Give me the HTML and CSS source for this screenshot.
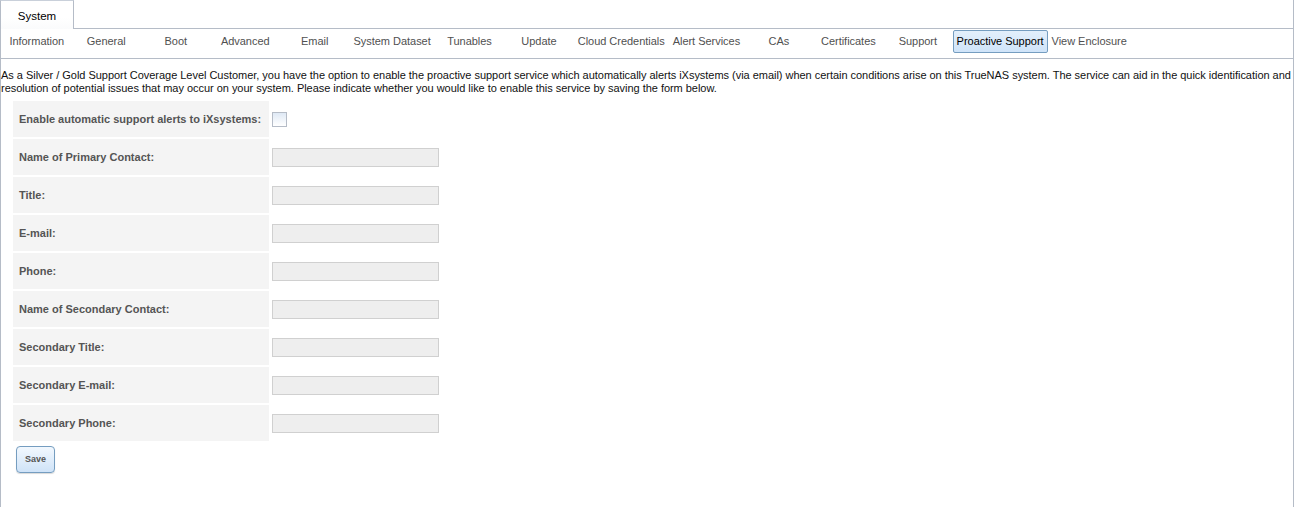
FILE: index.html
```html
<!DOCTYPE html>
<html>
<head>
<meta charset="utf-8">
<title>System - Proactive Support</title>
<link rel="stylesheet" href="styles.css">
</head>
<body>
<div class="tabs">
  <div class="tabstrip">
    <div class="tab">System</div>
    <div class="strip-rest"></div>
  </div>
  <div class="panel">
    <div class="subnav">
      <span class="item">Information</span>
      <span class="item">General</span>
      <span class="item">Boot</span>
      <span class="item">Advanced</span>
      <span class="item">Email</span>
      <span class="item">System Dataset</span>
      <span class="item">Tunables</span>
      <span class="item">Update</span>
      <span class="item">Cloud Credentials</span>
      <span class="item">Alert Services</span>
      <span class="item">CAs</span>
      <span class="item">Certificates</span>
      <span class="item">Support</span>
      <span class="item active">Proactive Support</span>
      <span class="item">View Enclosure</span>
    </div>
    <div class="content">
      <p class="desc">As a Silver / Gold Support Coverage Level Customer, you have the option to enable the proactive support service which automatically alerts iXsystems (via email) when certain conditions arise on this TrueNAS system. The service can aid in the quick identification and resolution of potential issues that may occur on your system. Please indicate whether you would like to enable this service by saving the form below.</p>
      <table class="form">
        <tr><th>Enable automatic support alerts to iXsystems:</th><td><input type="checkbox" class="check"></td></tr>
        <tr><th>Name of Primary Contact:</th><td><input type="text" class="field"></td></tr>
        <tr><th>Title:</th><td><input type="text" class="field"></td></tr>
        <tr><th>E-mail:</th><td><input type="text" class="field"></td></tr>
        <tr><th>Phone:</th><td><input type="text" class="field"></td></tr>
        <tr><th>Name of Secondary Contact:</th><td><input type="text" class="field"></td></tr>
        <tr><th>Secondary Title:</th><td><input type="text" class="field"></td></tr>
        <tr><th>Secondary E-mail:</th><td><input type="text" class="field"></td></tr>
        <tr><th>Secondary Phone:</th><td><input type="text" class="field"></td></tr>
      </table>
      <button class="save" type="button">Save</button>
    </div>
  </div>
</div>
</body>
</html>
```

FILE: styles.css
```css
html, body {
  margin: 0;
  padding: 0;
  background: #fff;
}
body {
  font-family: "Liberation Sans", Arial, sans-serif;
  font-size: 11px;
  color: #000;
}
.tabs {
  display: flex;
  flex-direction: column;
  min-height: 100vh;
  box-sizing: border-box;
}
.tabstrip {
  display: flex;
  height: 29px;
}
.tab {
  width: 74px;
  height: 29px;
  border: 1px solid #b5bcc7;
  border-bottom: none;
  border-top-color: #c9d0da;
  background: linear-gradient(#ffffff, #ffffff 60%, #fafbfc);
  font-size: 11.5px;
  color: #000;
  display: flex;
  align-items: center;
  justify-content: center;
  padding-top: 1px;
  box-sizing: border-box;
}
.strip-rest {
  flex: 1;
  border-bottom: 1px solid #b5bcc7;
  border-right: 1px solid #b5bcc7;
}
.panel {
  flex: 1;
  border-left: 1px solid #b5bcc7;
  border-right: 1px solid #b5bcc7;
  display: flex;
  flex-direction: column;
}
.subnav {
  display: flex;
  align-items: flex-start;
  padding: 1px 0 0 1px;
  height: 28px;
  border-bottom: 1px solid #b5bcc7;
}
.item {
  min-width: 61.5px;
  padding: 4px 3px;
  line-height: 13px;
  border: 1px solid transparent;
  border-radius: 2px;
  text-align: center;
  color: #505050;
  white-space: nowrap;
  letter-spacing: -0.03px;
}
.item.active {
  color: #000;
  border-color: #759dc0;
  background: linear-gradient(#e3effb, #cfe4f9);
}
.desc {
  margin: 10px 0 4px 0;
  line-height: 13px;
  color: #111;
  letter-spacing: -0.03px;
}
.form {
  margin-left: 10px;
  border-spacing: 2px;
  border-collapse: separate;
}
.form th {
  width: 244px;
  height: 36px;
  padding: 0 6px;
  background: #f4f4f4;
  text-align: left;
  font-weight: bold;
  color: #555;
  font-size: 11px;
  white-space: nowrap;
}
.form td {
  padding: 0 0 0 1px;
  vertical-align: middle;
}
.field {
  display: block;
  width: 167px;
  height: 19px;
  box-sizing: border-box;
  margin: 0;
  border: 1px solid #d0d0d0;
  background: #eee;
}
.check {
  appearance: none;
  -webkit-appearance: none;
  display: block;
  margin: 0;
  width: 15px;
  height: 15px;
  box-sizing: border-box;
  border: 1px solid #b5bcc7;
  background: linear-gradient(#dfe9f5, #ffffff);
}
.save {
  display: block;
  margin: 3px 0 0 15px;
  width: 39px;
  height: 27px;
  padding: 0 0 2px 0;
  border: 1px solid #759dc0;
  border-radius: 4px;
  background: linear-gradient(#f2f8fe, #cfe3f8);
  box-shadow: 0 1px 1px rgba(0,0,0,0.15);
  font-family: "Liberation Sans", Arial, sans-serif;
  font-size: 9px;
  font-weight: bold;
  color: #555;
}
```
